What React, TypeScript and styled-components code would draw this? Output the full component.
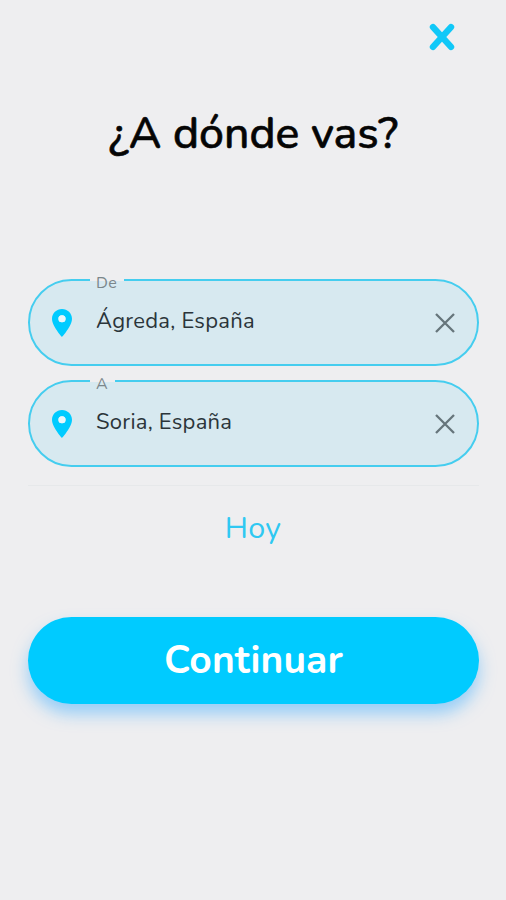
import React from "react";
import styled, { createGlobalStyle } from "styled-components";

const GlobalStyle = createGlobalStyle`
  *, *::before, *::after { box-sizing: border-box; }
  body {
    margin: 0;
    background: #eeeef0;
    font-family: Nunito, Lato, "Open Sans", sans-serif;
    font-kerning: normal;
  }
  button { font: inherit; border: 0; background: none; padding: 0; cursor: pointer; }
`;

const Screen = styled.main`
  display: flex;
  flex-direction: column;
  width: 506px;
  height: 900px;
  padding: 22px 27px 0 28px;
  background: #eeeef0;
  overflow: hidden;
`;

const TopBar = styled.header`
  display: flex;
  justify-content: flex-end;
  height: 30px;
  padding-right: 23px;
`;

const IconButton = styled.button`
  display: flex;
  flex: none;
  svg { display: block; }
`;

const Title = styled.h1`
  margin: 52px 0 115px;
  height: 60px;
  line-height: 60px;
  font-size: 44.5px;
  font-weight: 500;
  letter-spacing: 0;
  text-align: center;
  white-space: nowrap;
  color: #050505;
  -webkit-text-stroke: 0.6px #050505;
`;

const Fields = styled.div`
  display: flex;
  flex-direction: column;
  gap: 14px;
`;

const Field = styled.fieldset`
  display: block;
  min-width: 0;
  height: 87px;
  margin: 0;
  padding: 0;
  border: 2px solid #45cdef;
  border-radius: 44px;
  background: #d7e9f0;
  background-clip: padding-box;
`;

const Legend = styled.legend<{ $width: number }>`
  width: ${(p) => p.$width}px;
  height: 2px;
  margin-left: 60px;
  padding: 0 0 0 6px;
  line-height: 8px;
  font-size: 16px;
  letter-spacing: 0.5px;
  color: #7b868b;
`;

const FieldRow = styled.div`
  display: flex;
  align-items: center;
  height: 83px;
  padding: 0 22px 0 22px;
`;

const Value = styled.span`
  flex: 1;
  margin-left: 24px;
  padding-bottom: 3px;
  line-height: 30px;
  font-size: 22px;
  letter-spacing: 0.25px;
  color: #2b353a;
`;

const Divider = styled.hr`
  width: 100%;
  height: 1px;
  margin: 18px 0 0;
  border: 0;
  background: #e6e8ea;
`;

const DateButton = styled.button`
  align-self: center;
  height: 40px;
  margin: 22px 1px 69px 0;
  line-height: 40px;
  && { font-size: 30.5px; }
  letter-spacing: 0.3px;
  color: #2fc8f2;
`;

const Continue = styled.button`
  height: 87px;
  border-radius: 44px;
  && {
    background: #00cbff;
    font-size: 39px;
    font-weight: 700;
  }
  padding-top: 1px;
  line-height: 86px;
  letter-spacing: 0.1px;
  color: #fff;
  box-shadow: 0 10px 16px rgba(65, 175, 255, 0.5);
`;

const CloseIcon = () => (
  <svg width="28" height="30" viewBox="0 0 28 30" fill="none" stroke="#10c8f8" strokeWidth="6.4" strokeLinecap="round">
    <path d="M5 5.2 23 24.8M23 5.2 5 24.8" />
  </svg>
);

const ClearIcon = () => (
  <svg width="20" height="20" viewBox="0 0 20 20" fill="none" stroke="#66757b" strokeWidth="2.3">
    <path d="M1 1 19 19M19 1 1 19" />
  </svg>
);

const PinIcon = () => (
  <svg width="20" height="28" viewBox="5 2 14 20" preserveAspectRatio="none" fill="#00cbff">
    <path d="M12 2C8.13 2 5 5.13 5 9c0 5.25 7 13 7 13s7-7.75 7-13c0-3.87-3.13-7-7-7zm0 9.5a2.5 2.5 0 0 1 0-5 2.5 2.5 0 0 1 0 5z" />
    <circle cx="12" cy="9" r="2.5" fill="#e9f6fa" />
  </svg>
);

const places = [
  { label: "De", value: "Ágreda, España", gap: 34 },
  { label: "A", value: "Soria, España", gap: 25 },
];

export default function App() {
  return (
    <>
      <GlobalStyle />
      <Screen>
        <TopBar>
          <IconButton aria-label="Cerrar">
            <CloseIcon />
          </IconButton>
        </TopBar>
        <Title>¿A dónde vas?</Title>
        <Fields>
          {places.map((p) => (
            <Field key={p.label}>
              <Legend $width={p.gap}>{p.label}</Legend>
              <FieldRow>
                <PinIcon />
                <Value>{p.value}</Value>
                <IconButton aria-label="Borrar">
                  <ClearIcon />
                </IconButton>
              </FieldRow>
            </Field>
          ))}
        </Fields>
        <Divider />
        <DateButton>Hoy</DateButton>
        <Continue>Continuar</Continue>
      </Screen>
    </>
  );
}
